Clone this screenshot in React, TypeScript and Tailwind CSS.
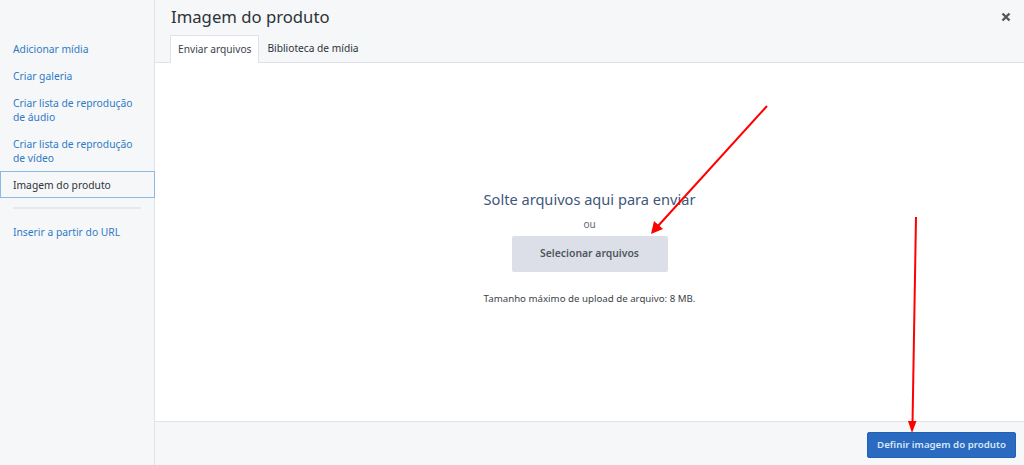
import React from "react";

export default function App() {
  const font = { fontFamily: '"Noto Sans", "Open Sans", sans-serif' };
  return (
    <div className="relative w-[1024px] h-[465px] flex bg-white overflow-hidden" style={font}>
      {/* Sidebar */}
      <div className="w-[155px] shrink-0 h-full bg-[#f6f7f9] border-r border-[#e1e3ea] pt-[35px]">
        <div className="flex flex-col text-[10.3px] leading-[14px] text-[#2e7bc4]">
          <div className="px-[13px] py-[6.5px]">Adicionar mídia</div>
          <div className="px-[13px] py-[6.5px]">Criar galeria</div>
          <div className="px-[13px] py-[6.5px]">Criar lista de reprodução<br />de áudio</div>
          <div className="px-[13px] py-[6.5px]">Criar lista de reprodução<br />de vídeo</div>
          <div className="px-[12px] py-[5.5px] border border-[#8db8e6] bg-[#f6f7f9] text-[#2c3338] w-[155px]">Imagem do produto</div>
          <div className="mx-[13px] my-[9px] h-[2px] bg-[#e8e9ee]" />
          <div className="px-[13px] py-[6.5px]">Inserir a partir do URL</div>
        </div>
      </div>

      {/* Main */}
      <div className="flex-1 flex flex-col h-full">
        <div className="bg-[#f6f7f9] border-b border-[#dfe2ea] h-[63px] flex flex-col shrink-0">
          <div className="flex items-center justify-between pl-[16px] pr-[12px] h-[35px]">
            <h1 className="text-[16.7px] leading-[24px] text-[#2c3338] font-normal">Imagem do produto</h1>
            <svg width="10" height="10" viewBox="0 0 10 10" className="mr-[1px]">
              <path d="M1.5 1.5 L8.5 8.5 M8.5 1.5 L1.5 8.5" stroke="#50575e" strokeWidth="2.4" strokeLinecap="butt" />
            </svg>
          </div>
          <div className="flex items-end pl-[15px] h-[28px] text-[10.2px]">
            <div className="h-[28px] -mb-[1px] px-[7px] flex items-center bg-white border border-b-0 border-[#dfe2ea] text-[#3c434a]">Enviar arquivos</div>
            <div className="h-[27px] px-[8px] flex items-center text-[#2c3338]">Biblioteca de mídia</div>
          </div>
        </div>

        <div className="flex-1 flex flex-col items-center pt-[126px] bg-white">
          <div className="text-[14.6px] leading-[20px] text-[#40577c]">Solte arquivos aqui para enviar</div>
          <div className="text-[10px] leading-[14px] text-[#646970] mt-[8px]">ou</div>
          <div className="mt-[5px] w-[156px] h-[36px] bg-[#dcdfe8] rounded-[2px] flex items-center justify-center text-[10.4px] font-semibold text-[#50575e]">Selecionar arquivos</div>
          <div className="mt-[20px] text-[9.7px] leading-[14px] text-[#3c434a]">Tamanho máximo de upload de arquivo: 8 MB.</div>
        </div>

        <div className="h-[44px] shrink-0 bg-[#f6f7f9] border-t border-[#e1e3ea] flex items-center justify-end pr-[8px]">
          <div className="w-[149px] h-[26px] bg-[#2a6ac0] rounded-[2px] border border-[#2262b4] flex items-center justify-center text-[9.7px] font-semibold text-[#d8e6f7] mt-[3px]">Definir imagem do produto</div>
        </div>
      </div>

      {/* Annotation arrows */}
      <svg className="absolute left-0 top-0 pointer-events-none" width="1024" height="465">
        <line x1="767" y1="106" x2="658" y2="226" stroke="#ff0000" strokeWidth="2" />
        <polygon points="651,234 654,221 663,229" fill="#ff0000" />
        <line x1="916" y1="217" x2="912.5" y2="424" stroke="#ff0000" strokeWidth="2" />
        <polygon points="912,433 908,421 916.5,421" fill="#ff0000" />
      </svg>
    </div>
  );
}
